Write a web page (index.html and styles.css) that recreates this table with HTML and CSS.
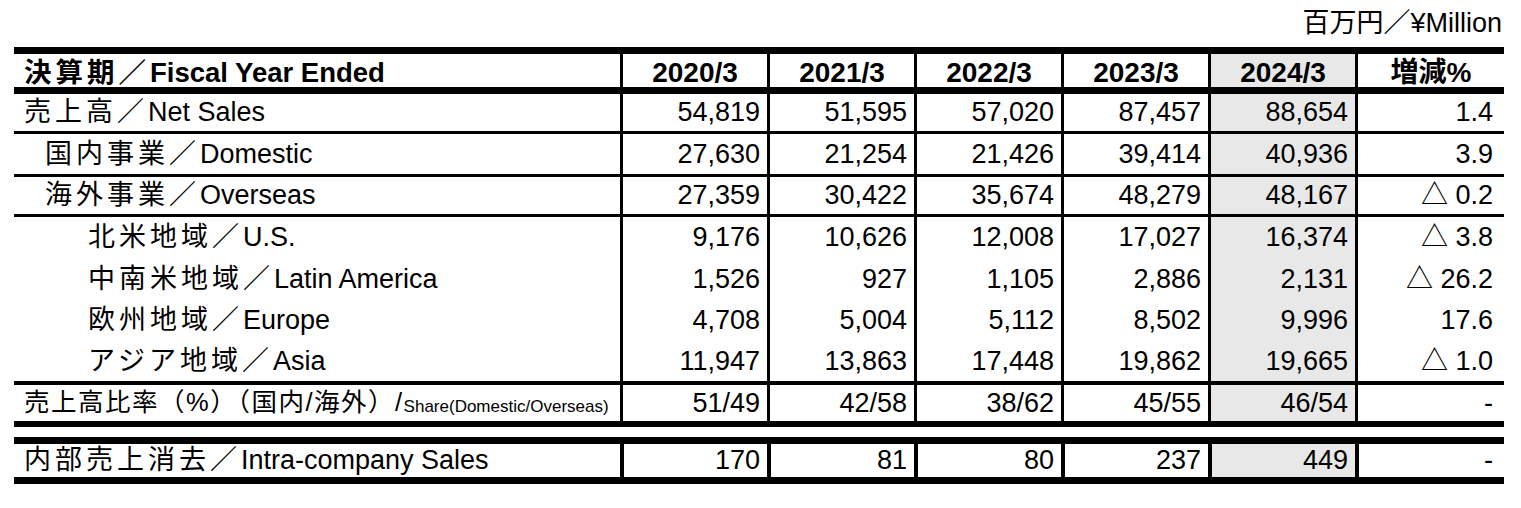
FILE: index.html
```html
<!DOCTYPE html>
<html lang="ja">
<head>
<meta charset="utf-8">
<title>Net Sales</title>
<link rel="stylesheet" href="styles.css">
</head>
<body>
<div class="sheet">
  <div class="unit">百万円／¥Million</div>
  <div class="tbl">
    <div class="row head">
      <div class="cell label"><span class="ja">決算期／</span>Fiscal Year Ended</div>
      <div class="cell">2020/3</div>
      <div class="cell">2021/3</div>
      <div class="cell">2022/3</div>
      <div class="cell">2023/3</div>
      <div class="cell cur">2024/3</div>
      <div class="cell">増減%</div>
    </div>
    <div class="row net">
      <div class="cell label"><span class="ja">売上高／</span>Net Sales</div>
      <div class="cell num">54,819</div>
      <div class="cell num">51,595</div>
      <div class="cell num">57,020</div>
      <div class="cell num">87,457</div>
      <div class="cell num cur">88,654</div>
      <div class="cell num last">1.4</div>
    </div>
    <div class="row dom">
      <div class="cell label l1"><span class="ja">国内事業／</span>Domestic</div>
      <div class="cell num">27,630</div>
      <div class="cell num">21,254</div>
      <div class="cell num">21,426</div>
      <div class="cell num">39,414</div>
      <div class="cell num cur">40,936</div>
      <div class="cell num last">3.9</div>
    </div>
    <div class="row ovs">
      <div class="cell label l1"><span class="ja">海外事業／</span>Overseas</div>
      <div class="cell num">27,359</div>
      <div class="cell num">30,422</div>
      <div class="cell num">35,674</div>
      <div class="cell num">48,279</div>
      <div class="cell num cur">48,167</div>
      <div class="cell num last">△ 0.2</div>
    </div>
    <div class="row us">
      <div class="cell label l2"><span class="ja">北米地域／</span>U.S.</div>
      <div class="cell num">9,176</div>
      <div class="cell num">10,626</div>
      <div class="cell num">12,008</div>
      <div class="cell num">17,027</div>
      <div class="cell num cur">16,374</div>
      <div class="cell num last">△ 3.8</div>
    </div>
    <div class="row latin">
      <div class="cell label l2"><span class="ja">中南米地域／</span>Latin America</div>
      <div class="cell num">1,526</div>
      <div class="cell num">927</div>
      <div class="cell num">1,105</div>
      <div class="cell num">2,886</div>
      <div class="cell num cur">2,131</div>
      <div class="cell num last">△ 26.2</div>
    </div>
    <div class="row eur">
      <div class="cell label l2"><span class="ja">欧州地域／</span>Europe</div>
      <div class="cell num">4,708</div>
      <div class="cell num">5,004</div>
      <div class="cell num">5,112</div>
      <div class="cell num">8,502</div>
      <div class="cell num cur">9,996</div>
      <div class="cell num last">17.6</div>
    </div>
    <div class="row asia">
      <div class="cell label l2"><span class="ja">アジア地域／</span>Asia</div>
      <div class="cell num">11,947</div>
      <div class="cell num">13,863</div>
      <div class="cell num">17,448</div>
      <div class="cell num">19,862</div>
      <div class="cell num cur">19,665</div>
      <div class="cell num last">△ 1.0</div>
    </div>
    <div class="row share">
      <div class="cell label"><span class="ja-s">売上高比率（%）（国内/海外）/</span><span class="small">Share(Domestic/Overseas)</span></div>
      <div class="cell num">51/49</div>
      <div class="cell num">42/58</div>
      <div class="cell num">38/62</div>
      <div class="cell num">45/55</div>
      <div class="cell num cur">46/54</div>
      <div class="cell num last">-</div>
    </div>
  </div>
  <div class="tbl intra">
    <div class="row ic">
      <div class="cell label"><span class="ja">内部売上消去／</span>Intra-company Sales</div>
      <div class="cell num">170</div>
      <div class="cell num">81</div>
      <div class="cell num">80</div>
      <div class="cell num">237</div>
      <div class="cell num cur">449</div>
      <div class="cell num last">-</div>
    </div>
  </div>
</div>
</body>
</html>
```

FILE: styles.css
```css
* { box-sizing: border-box; }
html, body { margin: 0; padding: 0; background: #fff; }
body {
  font-family: "Liberation Sans", "Noto Sans CJK JP", Arial, sans-serif;
  font-size: 27px;
  color: #000;
}
.sheet {
  margin-left: 14px;
  width: 1490px;
}
.unit {
  height: 47px;
  display: flex;
  align-items: center;
  justify-content: flex-end;
  padding-right: 2px;
  padding-bottom: 6px;
  white-space: nowrap;
}
.tbl {
  border-top: 7px solid #000;
}
.tbl.intra {
  margin-top: 10px;
}
.row {
  display: grid;
  grid-template-columns: 606px repeat(5, 147px) 149px;
}
.cell {
  display: flex;
  align-items: center;
  justify-content: flex-end;
  padding-right: 7px;
  border-left: 3px solid #000;
  white-space: nowrap;
  line-height: 1;
}
.cell.label {
  border-left: none;
  justify-content: flex-start;
  padding-left: 10px;
  padding-right: 0;
}
.ja { letter-spacing: 4px; }
.cell.l1 { padding-left: 31px; }
.cell.l2 { padding-left: 74px; }
.cell.last { padding-right: 11px; }
.cell.cur { background: #e8e8e8; }

.head { height: 40px; border-bottom: 7px solid #000; font-weight: bold; }
.head .cell { justify-content: center; padding: 0; padding-top: 4px; font-size: 28px; }
.head .cell.label { justify-content: flex-start; padding-left: 10px; font-size: 27.5px; }

.net { height: 40px; border-bottom: 3px solid #000; }
.dom { height: 43px; border-bottom: 3px solid #000; }
.ovs { height: 40px; border-bottom: 3px solid #000; }
.us { height: 41px; }
.latin { height: 42px; }
.eur { height: 41px; }
.asia { height: 44px; border-bottom: 4px solid #000; }
.share { height: 42px; border-bottom: 6px solid #000; }
.ja-s { font-size: 25.5px; letter-spacing: 1.5px; }
.small { font-size: 17px; padding-top: 6px; }

.ic { height: 40px; border-bottom: 7px solid #000; }
.ic .cell { border-left-width: 4px; }
.ic .cell.label { border-left: none; }
```
